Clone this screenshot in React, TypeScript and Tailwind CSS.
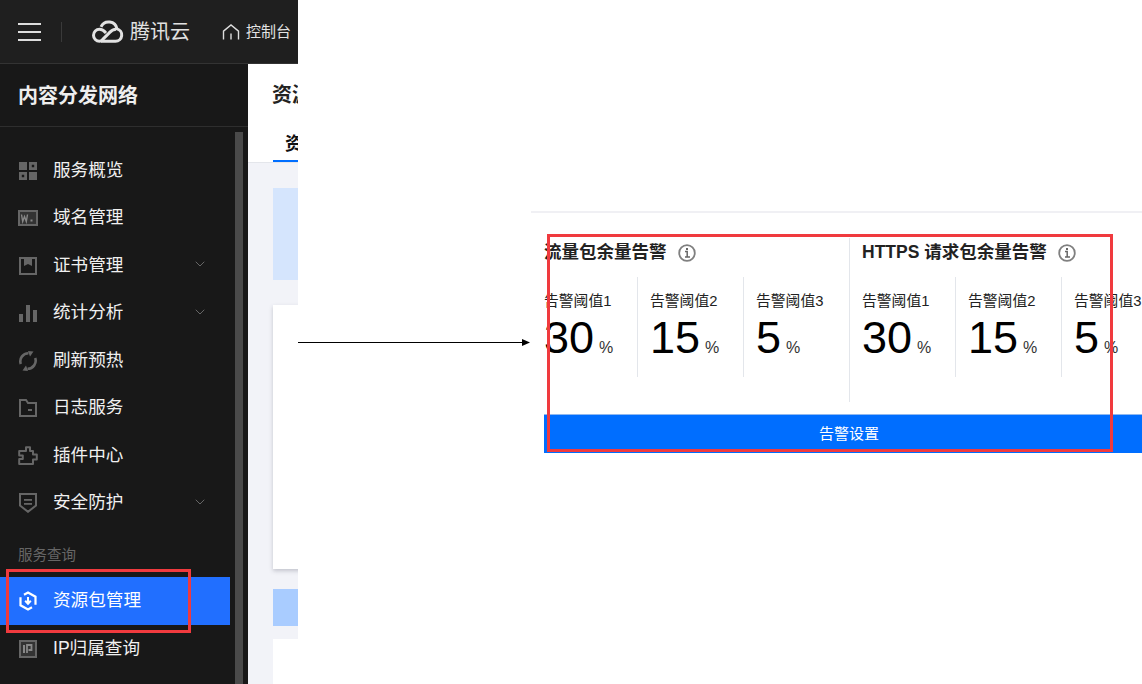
import { ChevronDown } from 'lucide-react';
import type { ReactNode } from 'react';

const font = { fontFamily: '"Liberation Sans", "Noto Sans CJK SC", sans-serif' };

const GridIcon = () => (
  <svg width="18" height="18" viewBox="0 0 18 18" fill="#666">
    <rect x="0" y="0" width="8" height="8" />
    <path fillRule="evenodd" d="M10 0h8v8h-8z M12.800 2.800v2.400h2.400v-2.400z" />
    <path fillRule="evenodd" d="M0 10h8v8H0z M2.800 12.800v2.400h2.400v-2.400z" />
    <rect x="10" y="10" width="8" height="8" />
  </svg>
);

const DomainIcon = () => (
  <svg width="20" height="16" viewBox="0 0 20 16">
    <rect x="1" y="1" width="18" height="14" fill="#333" stroke="#666" strokeWidth="2" />
    <path d="M3.500 4.500l1.200 7 1.800-5 1.800 5 1.200-7" fill="none" stroke="#888" strokeWidth="1.400" />
    <rect x="12.500" y="9.500" width="2" height="2" fill="#888" />
  </svg>
);

const CertIcon = () => (
  <svg width="18" height="18" viewBox="0 0 18 18" fill="none">
    <rect x="1" y="1" width="16" height="16" stroke="#666" strokeWidth="2" />
    <path d="M5 2h8v7l-4-2-4 2z" fill="#666" />
  </svg>
);

const BarsIcon = () => (
  <svg width="18" height="17" viewBox="0 0 18 17" fill="#666">
    <rect x="0" y="9" width="4" height="8" />
    <rect x="7" y="0" width="4" height="17" />
    <rect x="14" y="5" width="4" height="12" />
  </svg>
);

const RefreshIcon = () => (
  <svg width="20" height="20" viewBox="0 0 20 20" fill="none" stroke="#666" strokeWidth="2.600">
    <path d="M2.800 13A8 8 0 0 1 10.500 2.300" />
    <path d="M17.200 7A8 8 0 0 1 9.500 17.700" />
    <path d="M10 0L15.500 .5 12 5.500z" fill="#666" stroke="none" />
    <path d="M10 20L4.500 19.500 8 14.500z" fill="#666" stroke="none" />
  </svg>
);

const FolderIcon = () => (
  <svg width="18" height="18" viewBox="0 0 18 18" fill="none">
    <path d="M1 1h6l2 3h8v13H1z" stroke="#666" strokeWidth="2" />
    <rect x="9" y="10" width="4" height="2" fill="#666" />
  </svg>
);

const PluginIcon = () => (
  <svg width="20" height="19" viewBox="0 0 20 19" fill="none">
    <path d="M6 5h2V1.200h4V5h3v3.500h3.800v5H15V18H1.200v-5H4.800V9.500H1.200V5z" stroke="#666" strokeWidth="2" strokeLinejoin="round" />
  </svg>
);

const ShieldIcon = () => (
  <svg width="18" height="20" viewBox="0 0 18 20" fill="none">
    <path d="M1 1h16v11.500L9 18.800 1 12.500z" stroke="#666" strokeWidth="2" />
    <rect x="5" y="6" width="8" height="1.800" fill="#666" />
    <rect x="5" y="10" width="8" height="1.800" fill="#666" />
  </svg>
);

const PackageIcon = () => (
  <svg width="18" height="20" viewBox="0 0 18 20" fill="none" stroke="#fff">
    <path d="M5 3.800L9 1.500l7.500 4.200v8" strokeWidth="2.200" />
    <path d="M13 16.200L9 18.500l-7.500-4.200v-8" strokeWidth="2.200" />
    <path d="M9 6v6.500M6.200 9.800L9 12.800l2.800-3" strokeWidth="2" />
  </svg>
);

const IpIcon = () => (
  <svg width="18" height="18" viewBox="0 0 18 18">
    <rect x="1" y="1" width="16" height="16" fill="#333" stroke="#666" strokeWidth="2" />
    <rect x="4" y="5" width="2" height="8" fill="#888" />
    <path d="M8 13V5h4.500v5H9.500" fill="none" stroke="#888" strokeWidth="1.800" />
  </svg>
);

const CloudLogo = () => (
  <svg width="32" height="24" viewBox="0 0 32 24" fill="none" stroke="#e2e2e2" strokeWidth="3">
    <path d="M9 22.300h14.500a6.300 6.300 0 0 0 1.500-12.400A8.500 8.500 0 0 0 9 7.800" />
    <path d="M24 10.300c-3.500 0-5 1.700-7 3.800l-6 6c-1 1-1.700 2.200-3.500 2.200a6 6 0 0 1 0-12c3 0 5 2 6.500 3.700" />
  </svg>
);

const HomeIcon = () => (
  <svg width="18" height="16" viewBox="0 0 18 16" fill="none" stroke="#ddd" strokeWidth="1.400">
    <path d="M1.500 15.500V7.200L9 1l7.500 6.200v8.300" />
    <path d="M9 9.500v6" />
  </svg>
);

const InfoIcon = () => (
  <svg width="18" height="18" viewBox="0 0 18 18" fill="none">
    <circle cx="9" cy="9" r="7.800" stroke="#808080" strokeWidth="1.800" />
    <rect x="8" y="4" width="2" height="2" fill="#666" />
    <path d="M7 7.500h2.200v5M7 13h5" stroke="#666" strokeWidth="1.500" />
  </svg>
);

function MenuItem({ icon, label, arrow, active }: { icon: ReactNode; label: string; arrow?: boolean; active?: boolean }) {
  return (
    <div className={active ? 'flex h-[48px] items-center bg-[#216fff] text-white' : 'flex h-[47.5px] items-center text-[#f0f0f0]'}>
      <div className="ml-[18px] flex w-[20px] shrink-0 justify-center">{icon}</div>
      <span className="ml-[15px] flex-1 text-[17.600px] leading-none">{label}</span>
      {arrow && <ChevronDown className="mr-[22px] -mt-[3px] h-[16px] w-[16px] text-[#666]" strokeWidth={1.500} />}
    </div>
  );
}

function Threshold({ label, value, first, width }: { label: string; value: string; first?: boolean; width: string }) {
  return (
    <div className={`${width} ${first ? '' : 'border-l border-[#e3e6eb] pl-[12px]'} h-[100px] shrink-0 pt-[15px]`}>
      <div className="text-[14.800px] leading-[18px] whitespace-nowrap text-[#222]">{label}</div>
      <div className="mt-[3px] flex items-baseline whitespace-nowrap text-black">
        <span className="text-[45px] leading-[50px]">{value}</span>
        <span className="ml-[5px] text-[16px] text-[#333]">%</span>
      </div>
    </div>
  );
}

function AlertSection({ title, className }: { title: string; className: string }) {
  return (
    <div className={className}>
      <div className="flex h-[27px] items-center pt-[2px]">
        <span className="text-[17.500px] leading-none font-bold whitespace-nowrap text-[#222]">{title}</span>
        <span className="ml-[11px]"><InfoIcon /></span>
      </div>
      <div className="mt-[12px] flex">
        <Threshold first width="w-[93px]" label="告警阈值1" value="30" />
        <Threshold width="w-[106px]" label="告警阈值2" value="15" />
        <Threshold width="w-[106px]" label="告警阈值3" value="5" />
      </div>
    </div>
  );
}

export default function App() {
  return (
    <div className="relative flex h-[684px] w-[1142px] overflow-hidden bg-white" style={font}>
      <div className="flex h-full w-[298px] shrink-0 flex-col">
        <header className="flex h-[64px] shrink-0 items-center border-b border-[#333] bg-[#1f1f1f] text-[#e2e2e2]">
          <div className="ml-[18px] flex w-[23px] flex-col gap-[6px]">
            <div className="h-[2px] bg-[#ddd]" />
            <div className="h-[2px] bg-[#ddd]" />
            <div className="h-[2px] bg-[#ddd]" />
          </div>
          <div className="ml-[20px] h-[20px] w-px bg-[#3a3a3a]" />
          <div className="ml-[30px] -mt-[1px]"><CloudLogo /></div>
          <span className="ml-[6px] text-[20px] leading-none whitespace-nowrap">腾讯云</span>
          <div className="ml-[32px]"><HomeIcon /></div>
          <span className="ml-[6px] text-[15px] leading-none whitespace-nowrap">控制台</span>
        </header>
        <div className="flex min-h-0 flex-1">
          <aside className="flex w-[248px] shrink-0 flex-col bg-[#181818]">
            <div className="flex h-[63px] shrink-0 items-center border-b border-[#2e2e2e] pt-[2px] pl-[18px] text-[20px] font-bold text-[#eee]">
              内容分发网络
            </div>
            <div className="flex min-h-0 flex-1">
              <nav className="w-[230px] shrink-0 pt-[20px]">
                <MenuItem icon={<GridIcon />} label="服务概览" />
                <MenuItem icon={<DomainIcon />} label="域名管理" />
                <MenuItem icon={<CertIcon />} label="证书管理" arrow />
                <MenuItem icon={<BarsIcon />} label="统计分析" arrow />
                <MenuItem icon={<RefreshIcon />} label="刷新预热" />
                <MenuItem icon={<FolderIcon />} label="日志服务" />
                <MenuItem icon={<PluginIcon />} label="插件中心" />
                <MenuItem icon={<ShieldIcon />} label="安全防护" arrow />
                <div className="flex h-[50px] items-center pt-[7px] pl-[18px] text-[14.500px] text-[#666]">服务查询</div>
                <MenuItem active icon={<PackageIcon />} label="资源包管理" />
                <MenuItem icon={<IpIcon />} label="IP归属查询" />
              </nav>
              <div className="mt-[5px] ml-[5px] w-[8px] bg-[#4a4a4a]" />
            </div>
          </aside>
          <main className="min-w-0 flex-1 overflow-hidden bg-[#f2f3f8]">
            <div className="h-[99px] border-b border-[#e4e6eb] bg-white pl-[24px]">
              <div className="h-[62px] pt-[19px] text-[20px] leading-[24px] font-bold whitespace-nowrap text-[#222]">资源包管理</div>
              <div className="ml-[1px] h-[36px] border-b-[2px] border-[#006eff] pl-[12px] text-[18px] leading-[36px] font-bold whitespace-nowrap text-[#111]">资源包</div>
            </div>
            <div className="pt-[25px] pl-[25px]">
              <div className="h-[92px] w-[60px] bg-[#d5e5fd]" />
              <div className="mt-[25px] h-[264px] w-[60px] bg-white shadow-[0_2px_4px_rgba(54,58,80,0.25)]" />
              <div className="mt-[20px] h-[37px] w-[60px] bg-[#a9ccff]" />
              <div className="mt-[13px] h-[60px] w-[60px] bg-white" />
            </div>
          </main>
        </div>
      </div>

      <div className="min-w-0 flex-1 pt-[211px] pl-[233px]">
        <div className="h-[2px] w-[700px] bg-[#f0f0f4]" />
        <div className="ml-[13px] w-[610px]">
          <div className="flex pt-[25px]">
            <AlertSection title="流量包余量告警" className="h-[164px] w-[305px] shrink-0" />
            <AlertSection title="HTTPS 请求包余量告警" className="h-[164px] w-[305px] shrink-0 border-l border-[#e3e6eb] pl-[12px]" />
          </div>
          <div className="mt-[12px] flex h-[39px] items-center justify-center border-t border-[#8fb8f0] bg-[#006eff] pt-[1px] text-[15px] text-white">
            告警设置
          </div>
        </div>
      </div>

      {/* annotations on top of the screenshot */}
      <div className="absolute top-[569px] left-[6px] h-[64px] w-[185px] border-[3px] border-[#f03a3e]" />
      <div className="absolute top-[234px] left-[547px] h-[218px] w-[566px] border-[3px] border-[#f03a3e]" />
      <svg className="absolute top-[337px] left-[298px]" width="233" height="10" viewBox="0 0 233 10">
        <path d="M0 5.500h226" stroke="#000" strokeWidth="1" />
        <path d="M224 2L232 5.500 224 9z" fill="#000" />
      </svg>
    </div>
  );
}
